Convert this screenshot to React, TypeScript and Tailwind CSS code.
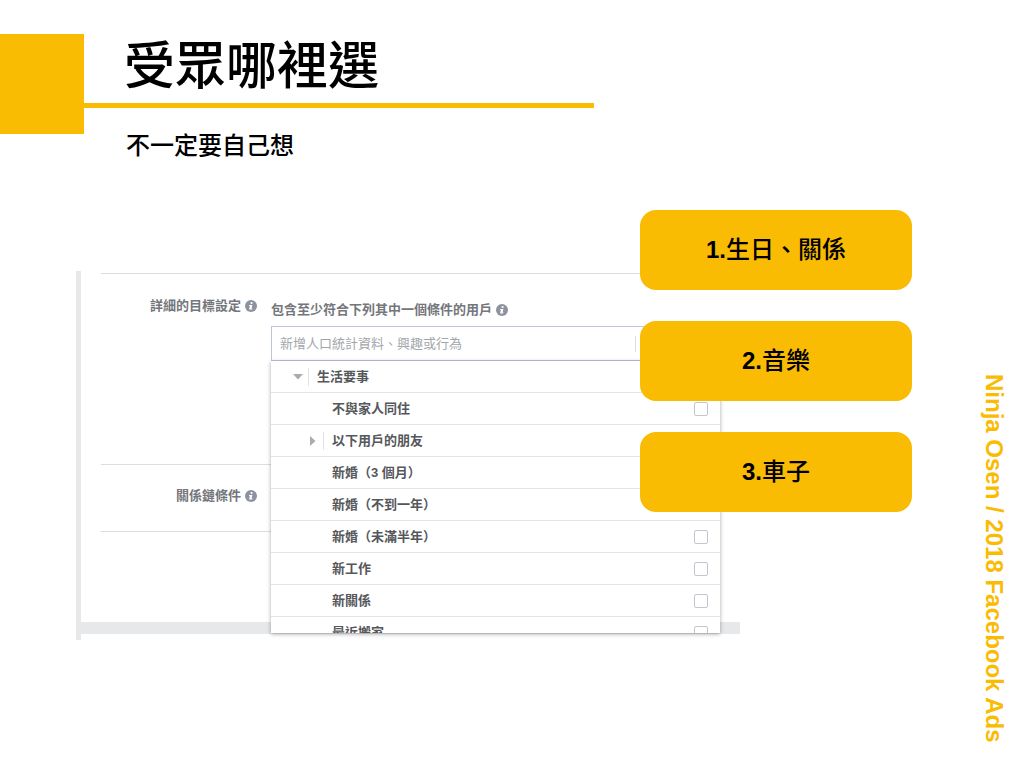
import type { ReactNode } from "react";

type Row = {
  label: string;
  kind: "open" | "closed" | "leaf";
};

const rows: Row[] = [
  { label: "生活要事", kind: "open" },
  { label: "不與家人同住", kind: "leaf" },
  { label: "以下用戶的朋友", kind: "closed" },
  { label: "新婚（3 個月）", kind: "leaf" },
  { label: "新婚（不到一年）", kind: "leaf" },
  { label: "新婚（未滿半年）", kind: "leaf" },
  { label: "新工作", kind: "leaf" },
  { label: "新關係", kind: "leaf" },
  { label: "最近搬家", kind: "leaf" },
];

const topics = ["生日、關係", "音樂", "車子"];

function InfoIcon() {
  return (
    <svg viewBox="0 0 12 12" className="size-3 shrink-0" aria-hidden="true">
      <circle cx="6" cy="6" r="6" fill="#8d929e" />
      <circle cx="6.6" cy="3" r="1.1" fill="#fff" />
      <path d="M4.2 4.9h3.2L6.6 8.4h.9l-.3 1.2H4.1l.8-3.5h-.9z" fill="#fff" />
    </svg>
  );
}

function FieldLabel({ children, htmlFor }: { children: ReactNode; htmlFor?: string }) {
  return (
    <label htmlFor={htmlFor} className="flex items-center gap-1 whitespace-nowrap text-[13px] leading-5 font-bold text-[#74767b]">
      {children}
      <InfoIcon />
    </label>
  );
}

function MenuRow({ row, index }: { row: Row; index: number }) {
  const id = `option-${index}`;
  const line = "flex h-8 items-center border-b border-[#e3e4e6] pr-3 text-[13px] font-bold text-[#55575b]";
  if (row.kind === "open") {
    return (
      <li className={line}>
        <button type="button" aria-expanded="true" className="flex items-center pl-[22px]">
          <svg viewBox="0 0 10 6" className="mr-[5px] h-[6px] w-[10px]" aria-hidden="true">
            <path d="M0 0h10L5 5.5z" fill="#a9abaf" />
          </svg>
          <span className="mr-2 h-[18px] w-px bg-[#e3e4e6]" />
          <span className="pt-px">{row.label}</span>
        </button>
      </li>
    );
  }
  if (row.kind === "closed") {
    return (
      <li className={line}>
        <button type="button" aria-expanded="false" className="flex items-center pl-[39px]">
          <svg viewBox="0 0 6 10" className="mr-[7px] h-[10px] w-[6px]" aria-hidden="true">
            <path d="M0 0v10L5.5 5z" fill="#a9abaf" />
          </svg>
          <span className="mr-2 h-[18px] w-px bg-[#e3e4e6]" />
          <span className="pt-px">{row.label}</span>
        </button>
      </li>
    );
  }
  return (
    <li className={line}>
      <label htmlFor={id} className="flex-1 pt-px pl-[61px]">
        {row.label}
      </label>
      <input
        id={id}
        type="checkbox"
        className="size-[14px] appearance-none rounded-[2px] border border-[#c3c6d0] bg-white checked:bg-[#fabb03]"
      />
    </li>
  );
}

export default function App() {
  return (
    <div className="flex min-h-screen overflow-hidden bg-white font-['Liberation_Sans','Noto_Sans_CJK_TC',sans-serif] text-black">
      <main className="min-w-0 flex-1">
        <header className="flex pt-[34px]">
          <div className="h-[100px] w-[84px] shrink-0 bg-[#fabb03]" />
          <div className="min-w-0 flex-1">
            <h1 className="w-[510px] max-w-full border-b-5 border-[#fabb03] pb-1 pl-10 text-[51px] leading-[65px] font-medium">
              受眾哪裡選
            </h1>
            <p className="pt-6 pl-[42px] text-2xl leading-7 font-medium">不一定要自己想</p>
          </div>
        </header>

        <div className="relative mt-[111px] ml-[76px]">
          <section className="mr-[224px] border-l-5 border-[#e7e8ea] pt-[2px] pb-[6px]">
            <div className="mr-5 ml-5 grid h-[191px] grid-cols-[170px_1fr] items-start border-t border-[#dcdde0]">
              <div className="flex justify-end pt-[22px] pr-[14px]">
                <FieldLabel htmlFor="targeting">詳細的目標設定</FieldLabel>
              </div>
              <div className="relative pt-[26px]">
                <FieldLabel htmlFor="targeting">包含至少符合下列其中一個條件的用戶</FieldLabel>
                <div className="mt-[6px] flex h-[35px] items-center border border-[#bdc7d8] bg-white">
                  <input
                    id="targeting"
                    type="text"
                    placeholder="新增人口統計資料、興趣或行為"
                    className="h-full min-w-0 flex-1 bg-transparent px-2 text-[13px] outline-none placeholder:text-[#a3a6ab]"
                  />
                  <span className="mr-[83px] h-4 w-px bg-[#dcdde0]" />
                </div>
                <ul className="absolute inset-x-0 top-full h-[272px] overflow-hidden bg-white shadow-[0_1px_4px_rgba(0,0,0,0.35)]">
                  {rows.map((row, i) => (
                    <MenuRow key={row.label} row={row} index={i} />
                  ))}
                </ul>
              </div>
            </div>
            <div className="mr-5 ml-5 grid h-[67px] grid-cols-[170px_1fr] items-start border-t border-[#dcdde0]">
              <div className="flex justify-end pt-[21px] pr-[14px]">
                <FieldLabel>關係鏈條件</FieldLabel>
              </div>
            </div>
            <div className="mr-5 ml-5 h-[91px] border-t border-[#dcdde0]" />
            <div className="h-3 bg-[#e7e8ea]" />
          </section>

          <ol className="absolute -top-[61px] right-[52px] flex w-[272px] flex-col gap-[31px]">
            {topics.map((topic, i) => (
              <li
                key={topic}
                className="flex h-20 items-center justify-center rounded-2xl bg-[#fabb03] text-2xl font-medium"
              >
                <p>
                  <b className="font-bold">{i + 1}.</b>
                  {topic}
                </p>
              </li>
            ))}
          </ol>
        </div>
      </main>

      <aside className="flex w-[60px] shrink-0 items-end justify-center pb-[25px]">
        <p className="text-2xl leading-7 font-bold whitespace-nowrap text-[#fabb03] [writing-mode:vertical-rl]">
          Ninja Osen / 2018 Facebook Ads
        </p>
      </aside>
    </div>
  );
}
